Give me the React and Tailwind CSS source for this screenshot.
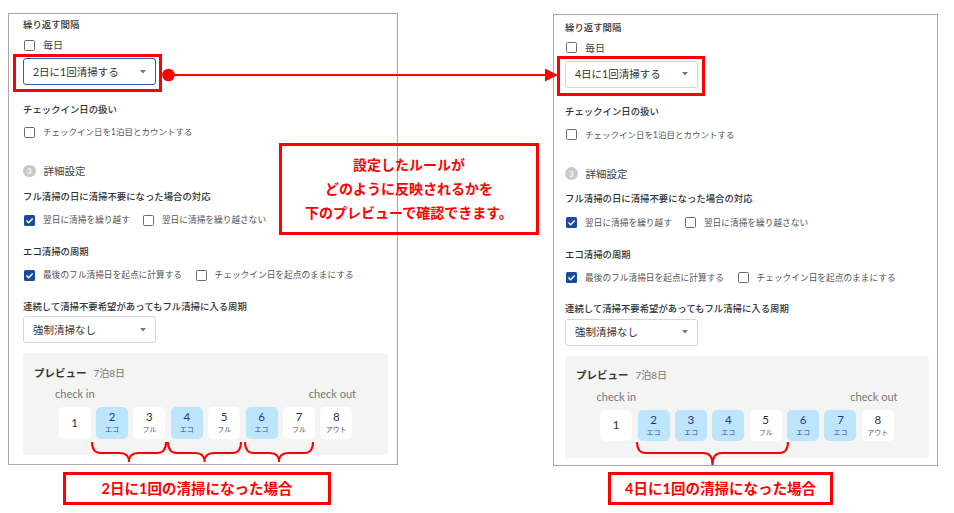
import React from "react";

const FONT = "font-[family-name:Lato,'Noto_Sans_CJK_JP',sans-serif]";

function Box({ checked }) {
  if (checked) {
    return (
      <span className="w-[11px] h-[11px] rounded-[1.5px] bg-[#1c4b9c] flex items-center justify-center shrink-0">
        <svg width="9" height="9" viewBox="0 0 10 10">
          <path d="M1.6 5.1 L4 7.4 L8.5 2.7" stroke="white" strokeWidth="1.6" fill="none" />
        </svg>
      </span>
    );
  }
  return <span className="w-[11px] h-[11px] rounded-[1.5px] border-[1.5px] border-[#6b6b6b] bg-white shrink-0" />;
}

function Select({ text, active, className }) {
  return (
    <div
      className={`w-[133px] h-[27px] rounded-[3px] border bg-white flex items-center justify-between pl-[9px] pr-[9px] ${
        active ? "border-[#2c5db3]" : "border-[#d6d6d6]"
      } ${className}`}
    >
      <span className="text-[10.5px] leading-[14px] text-[#333]">{text}</span>
      <svg width="6" height="4" viewBox="0 0 6 4">
        <path d="M0 0 L6 0 L3 3.5Z" fill="#777" />
      </svg>
    </div>
  );
}

function Label({ children, className = "" }) {
  return <div className={`text-[9.4px] leading-[13px] font-medium text-[#333] ${className}`}>{children}</div>;
}

function Check({ checked, children }) {
  return (
    <div className="flex items-center gap-[8px] ml-[1px]">
      <Box checked={checked} />
      <span className="text-[8.7px] leading-[14px] text-[#555]">{children}</span>
    </div>
  );
}

function Tile({ n, s, blue }) {
  return (
    <div
      className={`w-[32px] h-[31.5px] rounded-[5px] flex flex-col items-center justify-center ${
        blue ? "bg-[#bde5fb]" : "bg-white"
      }`}
    >
      <span className={`text-[11.5px] leading-[12px] ${blue ? "text-[#27348b]" : "text-[#333]"}`}>{n}</span>
      {s && (
        <span className={`text-[7px] leading-[9px] mt-[2px] ${blue ? "text-[#3a4a9a]" : "text-[#555]"}`}>{s}</span>
      )}
    </div>
  );
}

const leftTiles = [
  { n: 1 },
  { n: 2, s: "エコ", blue: true },
  { n: 3, s: "フル" },
  { n: 4, s: "エコ", blue: true },
  { n: 5, s: "フル" },
  { n: 6, s: "エコ", blue: true },
  { n: 7, s: "フル" },
  { n: 8, s: "アウト" },
];

const rightTiles = [
  { n: 1 },
  { n: 2, s: "エコ", blue: true },
  { n: 3, s: "エコ", blue: true },
  { n: 4, s: "エコ", blue: true },
  { n: 5, s: "フル" },
  { n: 6, s: "エコ", blue: true },
  { n: 7, s: "エコ", blue: true },
  { n: 8, s: "アウト" },
];

function Panel({ right }) {
  const tiles = right ? rightTiles : leftTiles;
  return (
    <div
      className={`border border-[#a8a8a8] h-[452px] shrink-0 ${
        right ? "w-[385px] pl-[11px] pr-[8px] pt-[5.5px] mt-[14px] ml-[155px]" : "w-[390px] pl-[14px] pr-[9px] pt-[4px] mt-[13px]"
      }`}
    >
      <Label>繰り返す間隔</Label>
      <div className="mt-[7px] h-[14px] flex items-center gap-[8px] ml-[1px]">
        <Box />
        <span className="text-[10px] leading-[14px] text-[#444]">毎日</span>
      </div>
      <Select className="mt-[6px]" active={!right} text={right ? "4日に1回清掃する" : "2日に1回清掃する"} />

      <Label className="mt-[17.5px]">チェックイン日の扱い</Label>
      <div className="mt-[9.5px] h-[14px] flex items-center gap-[8px] ml-[1px]">
        <Box />
        <span className="text-[8.5px] leading-[14px] text-[#555]">チェックイン日を1泊目とカウントする</span>
      </div>

      <div className="mt-[25px] h-[14px] flex items-center gap-[8px]">
        <span className="w-[12.5px] h-[12.5px] rounded-full bg-[#c9c9c9] flex items-center justify-center text-white text-[8px] font-bold leading-none">
          3
        </span>
        <span className="text-[10.5px] leading-[14px] text-[#444]">詳細設定</span>
      </div>

      <Label className="mt-[11.5px]">フル清掃の日に清掃不要になった場合の対応</Label>
      <div className="mt-[10.5px] h-[14px] flex items-center gap-[12px]">
        <Check checked>翌日に清掃を繰り越す</Check>
        <Check>翌日に清掃を繰り越さない</Check>
      </div>

      <Label className="mt-[18px]">エコ清掃の周期</Label>
      <div className="mt-[10px] h-[14px] flex items-center gap-[12.5px]">
        <Check checked>最後のフル清掃日を起点に計算する</Check>
        <Check>チェックイン日を起点のままにする</Check>
      </div>

      <Label className="mt-[17.5px]">連続して清掃不要希望があってもフル清掃に入る周期</Label>
      <Select className="mt-[3.5px]" text="強制清掃なし" />

      <div className="mt-[10px] h-[102px] rounded-[4px] bg-[#f4f4f4] pt-[12.5px] pl-[11px]">
        <div className="flex items-baseline gap-[7px] h-[14px]">
          <span className="text-[10.5px] leading-[14px] font-bold text-[#333]">プレビュー</span>
          <span className="text-[10px] leading-[14px] text-[#777]">7泊8日</span>
        </div>
        <div className="-ml-[11px] flex flex-col items-center">
          <div className="mt-[7.5px] w-[301px] flex justify-between text-[11px] leading-[14px] text-[#777]">
            <span>check in</span>
            <span>check out</span>
          </div>
          <div className="mt-[6px] flex gap-[5.4px]">
            {tiles.map((t) => (
              <Tile key={t.n} {...t} />
            ))}
          </div>
        </div>
      </div>
    </div>
  );
}

function brace(x1, x2, t, m, b) {
  const mid = (x1 + x2) / 2;
  const r = 9;
  return `M${x1} ${t} Q${x1} ${m} ${x1 + r} ${m} L${mid - r} ${m} Q${mid} ${m} ${mid} ${b} Q${mid} ${m} ${mid + r} ${m} L${x2 - r} ${m} Q${x2} ${m} ${x2} ${t}`;
}

export default function App() {
  return (
    <div className={`relative w-[954px] h-[513px] bg-white overflow-hidden ${FONT}`}>
      <div className="flex items-start pl-[8px]">
        <Panel />
        <Panel right />
      </div>

      {/* highlight boxes */}
      <div className="absolute left-[13px] top-[53.5px] w-[149px] h-[38.5px] border-[3px] border-[#ff0000]" />
      <div className="absolute left-[557px] top-[56px] w-[148px] h-[40px] border-[3px] border-[#ff0000]" />

      {/* callout */}
      <div className="absolute left-[279px] top-[143px] w-[260px] h-[92px] border-[3px] border-[#ff0000] flex flex-col items-center justify-center text-[14px] leading-[24px] font-bold text-[#ff0000]">
        <div>設定したルールが</div>
        <div>どのように反映されるかを</div>
        <div>下のプレビューで確認できます。</div>
      </div>

      {/* arrow and braces */}
      <svg className="absolute left-0 top-0 pointer-events-none" width="954" height="513">
        <circle cx="168.5" cy="75" r="6.3" fill="#ff0000" />
        <line x1="168" y1="75" x2="547" y2="75" stroke="#ff0000" strokeWidth="2" />
        <path d="M545 68.5 L558 75 L545 81.5Z" fill="#ff0000" />
        <g stroke="#ff0000" strokeWidth="2" fill="none">
          <path d={brace(92, 166, 442, 453, 462)} />
          <path d={brace(168, 241, 442, 453, 462)} />
          <path d={brace(245, 313, 442, 453, 462)} />
          <path d={brace(637, 788, 442, 453, 465)} />
        </g>
      </svg>

      {/* bottom labels */}
      <div className="absolute left-[63px] top-[472px] w-[268px] h-[33px] border-[3px] border-[#ff0000] flex items-center justify-center text-[14.5px] font-bold text-[#ff0000]">
        2日に1回の清掃になった場合
      </div>
      <div className="absolute left-[608px] top-[472px] w-[225px] h-[33px] border-[3px] border-[#ff0000] flex items-center justify-center text-[14.5px] font-bold text-[#ff0000]">
        4日に1回の清掃になった場合
      </div>
    </div>
  );
}
